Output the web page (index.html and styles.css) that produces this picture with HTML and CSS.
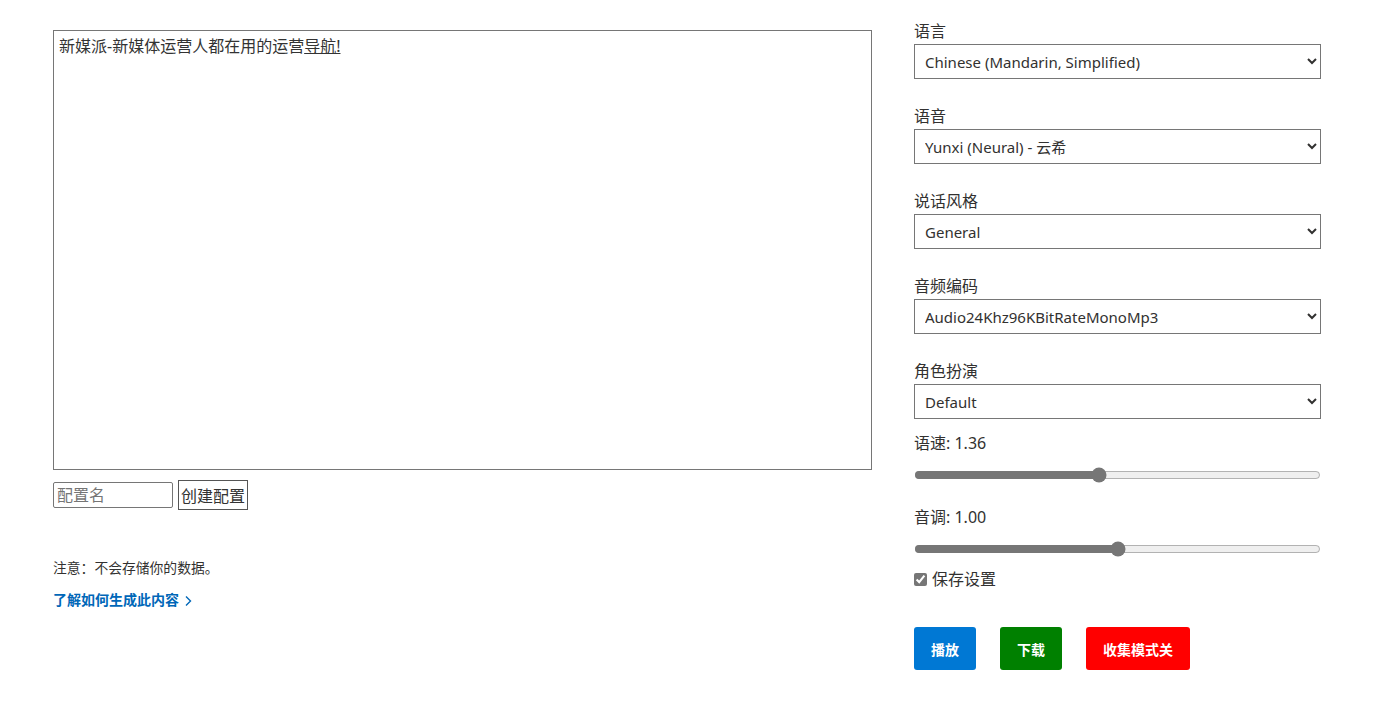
FILE: index.html
```html
<!DOCTYPE html>
<html lang="zh-CN">
<head>
<meta charset="utf-8">
<title>语音合成</title>
<link rel="stylesheet" href="styles.css">
</head>
<body>
<div class="page">
  <section class="editor-col">
    <div class="editor" contenteditable="true">新媒派-新媒体运营人都在用的运营<a class="inline-link" href="#">导航!</a></div>
    <div class="config-row">
      <input class="config-name" type="text" placeholder="配置名">
      <button class="config-btn" type="button">创建配置</button>
    </div>
    <p class="note">注意：不会存储你的数据。</p>
    <a class="learn-link" href="#">了解如何生成此内容
      <svg class="chev" width="8" height="12" viewBox="0 0 8 12"><path d="M2 1.5 L6.5 6 L2 10.5" fill="none" stroke="currentColor" stroke-width="1.4"/></svg>
    </a>
  </section>

  <section class="settings-col">
    <div class="field">
      <label class="field-label">语言</label>
      <select class="field-select"><option>Chinese (Mandarin, Simplified)</option></select>
    </div>
    <div class="field">
      <label class="field-label">语音</label>
      <select class="field-select"><option>Yunxi (Neural) - 云希</option></select>
    </div>
    <div class="field">
      <label class="field-label">说话风格</label>
      <select class="field-select"><option>General</option></select>
    </div>
    <div class="field">
      <label class="field-label">音频编码</label>
      <select class="field-select"><option>Audio24Khz96KBitRateMonoMp3</option></select>
    </div>
    <div class="field field-last">
      <label class="field-label">角色扮演</label>
      <select class="field-select"><option>Default</option></select>
    </div>

    <label class="field-label">语速: 1.36</label>
    <input class="slider" type="range" min="0" max="3" step="0.01" value="1.36">

    <label class="field-label slider-label">音调: 1.00</label>
    <input class="slider" type="range" min="0" max="2" step="0.01" value="1.00">

    <label class="save-row"><input class="save-check" type="checkbox" checked> 保存设置</label>

    <div class="actions">
      <button class="action action-play" type="button">播放</button>
      <button class="action action-download" type="button">下载</button>
      <button class="action action-collect" type="button">收集模式关</button>
    </div>
  </section>
</div>
</body>
</html>
```

FILE: styles.css
```css
* { box-sizing: border-box; }

body {
  margin: 0;
  background: #fff;
  color: #323130;
  font-family: "Segoe UI", "Noto Sans", "Noto Sans CJK SC", sans-serif;
}

.page {
  display: flex;
  gap: 42px;
  padding-left: 53px;
}

/* left: text editor */
.editor-col {
  width: 819px;
  padding-top: 30px;
  display: flex;
  flex-direction: column;
  align-items: flex-start;
}

.editor {
  width: 819px;
  height: 440px;
  border: 1px solid #767676;
  padding: 4px 5px;
  font-size: 16px;
  line-height: 22px;
  color: #333;
  outline: none;
}

.inline-link {
  color: #333;
  text-decoration: underline;
}

.config-row {
  display: flex;
  align-items: center;
  gap: 5px;
  margin-top: 10px;
}

.config-name {
  width: 120px;
  height: 26px;
  border: 1px solid #767676;
  border-radius: 2px;
  padding: 0 3px;
  font-family: inherit;
  font-size: 16px;
  color: #333;
}
.config-name::placeholder { color: #757575; }

.config-btn {
  height: 30px;
  padding: 0 2px;
  background: #fff;
  border: 1px solid #555;
  border-radius: 0;
  font-family: inherit;
  font-size: 16px;
  color: #333;
}

.note {
  margin: 48px 0 0;
  font-size: 13.8px;
  line-height: 20px;
  color: #323130;
}

.learn-link {
  margin-top: 12px;
  display: inline-flex;
  align-items: center;
  gap: 5px;
  font-size: 14px;
  font-weight: 700;
  line-height: 20px;
  color: #0067b8;
  text-decoration: none;
}
.chev { margin-top: 1px; }

/* right: voice settings */
.settings-col {
  width: 407px;
  padding-top: 20px;
  display: flex;
  flex-direction: column;
  align-items: flex-start;
}

.field {
  width: 100%;
  display: flex;
  flex-direction: column;
  margin-bottom: 26px;
}
.field-last { margin-bottom: 13px; }

.field-label {
  font-size: 16px;
  line-height: 22px;
  color: #323130;
}
.field .field-label { margin-bottom: 2px; }

.field-select {
  width: 100%;
  height: 35px;
  border: 1px solid #767676;
  border-radius: 0;
  background: #fff;
  padding: 0 6px;
  font-family: inherit;
  font-size: 15px;
  color: #323130;
}

.slider {
  width: 100%;
  height: 16px;
  margin: 13px 0 0;
  accent-color: #767676;
}

.slider-label { margin-top: 23px; }

.save-row {
  margin-top: 11px;
  display: flex;
  align-items: center;
  gap: 5px;
  font-size: 16px;
  line-height: 22px;
  color: #323130;
}
.save-check {
  margin: 0;
  width: 13px;
  height: 13px;
  accent-color: #767676;
}

.actions {
  margin-top: 37px;
  display: flex;
  gap: 24px;
}

.action {
  height: 43px;
  padding: 0 17px;
  border: none;
  border-radius: 3px;
  font-family: inherit;
  font-size: 14px;
  font-weight: 700;
  color: #fff;
}
.action-play { background: #0078d4; }
.action-download { background: #008000; }
.action-collect { background: #ff0000; }
```
